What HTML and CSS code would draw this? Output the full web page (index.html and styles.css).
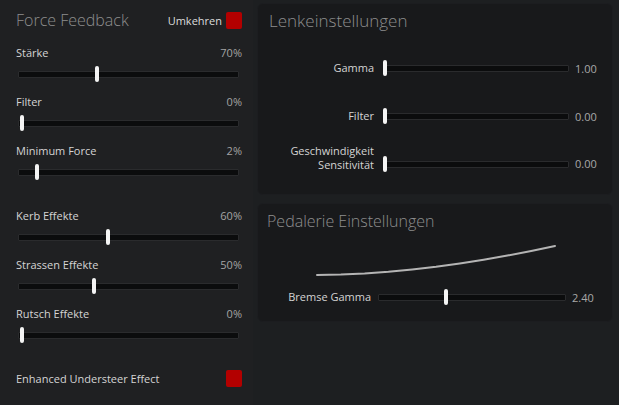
FILE: index.html
```html
<!DOCTYPE html>
<html lang="de">
<head>
<meta charset="utf-8">
<title>Force Feedback</title>
<link rel="stylesheet" href="styles.css">
</head>
<body>
<div class="app">
  <section class="ff-panel">
    <header class="ff-head">
      <h1 class="title">Force Feedback</h1>
      <label class="check-label">Umkehren <span class="checkbox"></span></label>
    </header>

    <div class="ff-row">
      <div class="row-head"><span class="lbl">Stärke</span><span class="val">70%</span></div>
      <div class="track"><span class="thumb" style="left:76px"></span></div>
    </div>
    <div class="ff-row">
      <div class="row-head"><span class="lbl">Filter</span><span class="val">0%</span></div>
      <div class="track"><span class="thumb" style="left:1px"></span></div>
    </div>
    <div class="ff-row">
      <div class="row-head"><span class="lbl">Minimum Force</span><span class="val">2%</span></div>
      <div class="track"><span class="thumb" style="left:16px"></span></div>
    </div>

    <div class="ff-row gap-top">
      <div class="row-head"><span class="lbl">Kerb Effekte</span><span class="val">60%</span></div>
      <div class="track"><span class="thumb" style="left:87px"></span></div>
    </div>
    <div class="ff-row">
      <div class="row-head"><span class="lbl">Strassen Effekte</span><span class="val">50%</span></div>
      <div class="track"><span class="thumb" style="left:73px"></span></div>
    </div>
    <div class="ff-row">
      <div class="row-head"><span class="lbl">Rutsch Effekte</span><span class="val">0%</span></div>
      <div class="track"><span class="thumb" style="left:1px"></span></div>
    </div>

    <div class="enh-row">
      <span class="lbl">Enhanced Understeer Effect</span>
      <span class="checkbox"></span>
    </div>
  </section>

  <div class="right-col">
    <section class="card steer">
      <h2 class="title card-title">Lenkeinstellungen</h2>
      <div class="h-row first">
        <span class="h-lbl">Gamma</span>
        <div class="track h-track"><span class="thumb" style="left:-1px"></span></div>
        <span class="h-val">1.00</span>
      </div>
      <div class="h-row">
        <span class="h-lbl">Filter</span>
        <div class="track h-track"><span class="thumb" style="left:-1px"></span></div>
        <span class="h-val">0.00</span>
      </div>
      <div class="h-row tall">
        <span class="h-lbl">Geschwindigkeit<br>Sensitivität</span>
        <div class="track h-track"><span class="thumb" style="left:-1px"></span></div>
        <span class="h-val">0.00</span>
      </div>
    </section>

    <section class="card pedal">
      <h2 class="title card-title pedal-title">Pedalerie Einstellungen</h2>
      <svg class="curve" width="242" height="33" viewBox="0 0 242 33">
        <polyline fill="none" stroke="#b4b4b4" stroke-width="2" stroke-linecap="round"
          points="1,31 24.8,30.5 48.6,29.4 72.4,27.7 96.2,25.4 120,22.7 143.8,19.4 167.6,15.7 191.4,11.6 215.2,7 239,2"/>
      </svg>
      <div class="h-row pedal-row">
        <span class="h-lbl p-lbl">Bremse Gamma</span>
        <div class="track p-track"><span class="thumb" style="left:65px"></span></div>
        <span class="h-val">2.40</span>
      </div>
    </section>
  </div>
</div>
</body>
</html>
```

FILE: styles.css
```css
* { box-sizing: border-box; }
html, body {
  margin: 0;
  padding: 0;
  background: #1d1f21;
  font-family: "Open Sans", "Noto Sans", "Liberation Sans", sans-serif;
  font-size: 11px;
  color: #d2d2d2;
}
.app {
  display: flex;
  width: 619px;
  height: 405px;
  overflow: hidden;
}
.ff-panel {
  width: 253px;
  height: 405px;
  background: #1f2022;
  padding: 8px 11px 0 16px;
}
.title {
  margin: 0;
  font-weight: 300;
  color: #8e8e8e;
  font-size: 16px;
  line-height: 24px;
}
.ff-head {
  display: flex;
  justify-content: space-between;
  align-items: center;
  height: 24px;
  margin-bottom: 13px;
}
.check-label {
  display: flex;
  align-items: center;
  gap: 4px;
  color: #dcdcdc;
  font-size: 11px;
}
.checkbox {
  display: inline-block;
  width: 16px;
  height: 17px;
  background: #b30000;
  border-radius: 2px;
}
.ff-row {
  height: 49px;
}
.ff-row.gap-top { margin-top: 16px; }
.row-head {
  display: flex;
  justify-content: space-between;
  height: 16px;
  line-height: 16px;
}
.lbl { color: #d4d4d4; }
.val { color: #a4a4a4; }
.track {
  position: relative;
  height: 7px;
  background: #0b0c0d;
  border: 1px solid #2a2b2d;
  border-radius: 1px;
}
.ff-row .track {
  margin: 10px 3px 0 2px;
}
.thumb {
  position: absolute;
  top: -6px;
  width: 4px;
  height: 16px;
  background: #f4f4f4;
  border-radius: 2px;
}
.enh-row {
  display: flex;
  justify-content: space-between;
  align-items: center;
  height: 17px;
  margin-top: 15px;
}

.right-col {
  display: flex;
  flex-direction: column;
  gap: 8px;
  padding: 3px 6px 0 4px;
  width: 366px;
}
.card {
  background: #18191b;
  border: 1px solid #1c1d20;
  border-radius: 6px;
}
.steer {
  height: 192px;
  padding: 5px 0 0 11px;
}
.card-title {
  font-size: 17px;
  line-height: 24px;
}
.h-row {
  display: flex;
  align-items: center;
  height: 20px;
  margin-left: -12px;
  margin-top: 28px;
}
.h-row.first { margin-top: 25px; }
.h-row.tall {
  align-items: flex-end;
  height: 32px;
  margin-top: 14px;
}
.h-lbl {
  width: 117px;
  text-align: right;
  line-height: 14px;
  color: #d4d4d4;
  flex: none;
}
.h-track {
  width: 186px;
  margin-left: 9px;
  flex: none;
}
.tall .h-track { margin-bottom: 4px; }
.tall .h-val { margin-bottom: 1px; line-height: 14px; }
.h-val {
  margin-left: 6px;
  color: #a8a8a8;
}
.pedal {
  height: 119px;
  padding: 6px 0 0 9px;
}
.pedal-title {
  font-size: 16px;
  line-height: 22px;
}
.curve {
  display: block;
  margin: 12px 0 0 49px;
}
.pedal-row {
  margin: 10px 0 0 -10px;
}
.p-lbl { width: 114px; }
.p-track {
  width: 188px;
  margin-left: 7px;
  flex: none;
}
```
